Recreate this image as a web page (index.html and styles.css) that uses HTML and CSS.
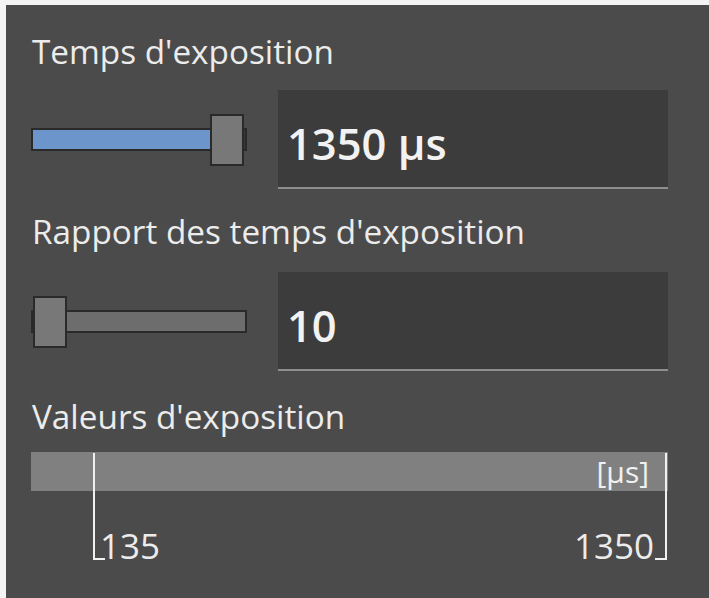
FILE: index.html
```html
<!DOCTYPE html>
<html lang="fr">
<head>
<meta charset="utf-8">
<title>Exposition</title>
<link rel="stylesheet" href="styles.css">
</head>
<body>
<div class="panel">
  <div class="label l1">Temps d'exposition</div>
  <div class="row r1">
    <div class="slider">
      <div class="track blue"></div>
      <div class="thumb" style="left: 179px"></div>
    </div>
    <div class="field">1350 µs</div>
  </div>
  <div class="label l2">Rapport des temps d'exposition</div>
  <div class="row r2">
    <div class="slider">
      <div class="track"></div>
      <div class="thumb" style="left: 2px"></div>
    </div>
    <div class="field">10</div>
  </div>
  <div class="label l3">Valeurs d'exposition</div>
  <div class="scale">
    <div class="bar"><span class="unit">[µs]</span></div>
    <div class="range">
      <span class="min">135</span>
      <span class="max">1350</span>
    </div>
  </div>
</div>
</body>
</html>
```
FILE: styles.css
```css
html, body {
  margin: 0;
  padding: 0;
  background: #f4f4f4;
}
body {
  width: 709px;
  height: 598px;
  overflow: hidden;
  font-family: "Open Sans", "Noto Sans", sans-serif;
  color: #ececec;
}
.panel {
  box-sizing: border-box;
  margin: 5px 0 0 6px;
  width: 703px;
  height: 593px;
  background: #4b4b4b;
  padding: 26px 41px 0 25px;
  display: flex;
  flex-direction: column;
}
.label {
  font-size: 33.3px;
  line-height: 40px;
  height: 40px;
  white-space: nowrap;
  padding-left: 1px;
}
.l2 { margin-top: 22px; }
.l3 { margin-top: 25px; }
.row {
  display: flex;
  align-items: center;
  gap: 31px;
  margin-top: 19px;
}
.r2 { margin-top: 21px; }
.slider {
  position: relative;
  width: 216px;
  height: 52px;
  display: flex;
  align-items: center;
}
.track {
  box-sizing: border-box;
  width: 100%;
  height: 23px;
  background: #6d6d6d;
  border: 2px solid #2a2a2a;
}
.track.blue {
  background: linear-gradient(to right, #6b95cb 0, #6b95cb 90%, #3a3a3a 90%);
}
.thumb {
  position: absolute;
  top: 0;
  box-sizing: border-box;
  width: 34px;
  height: 52px;
  background: #787878;
  border: 2px solid #2a2a2a;
}
.field {
  box-sizing: border-box;
  width: 390px;
  height: 99px;
  background: #3c3c3c;
  border-bottom: 2px solid #8e8e8e;
  display: flex;
  align-items: center;
  padding: 10px 0 0 9px;
  font-size: 43.5px;
  font-weight: 600;
  color: #f2f2f2;
}
.scale {
  margin-top: 16px;
  display: flex;
  flex-direction: column;
}
.bar {
  height: 39px;
  background: #808080;
  display: flex;
  align-items: center;
  justify-content: flex-end;
  padding-right: 19px;
}
.unit {
  font-size: 30px;
  line-height: 1;
  color: #f0f0f0;
}
.range {
  position: relative;
  box-sizing: border-box;
  margin: -38px 1px 0 62px;
  height: 107px;
  border-left: 2px solid #f0f0f0;
  border-right: 2px solid #f0f0f0;
  display: flex;
  justify-content: space-between;
  align-items: flex-end;
  font-size: 35px;
  line-height: 35px;
}
.range::before, .range::after {
  content: "";
  position: absolute;
  bottom: 0;
  width: 10px;
  height: 2px;
  background: #f0f0f0;
}
.range::before { left: 0; }
.range::after { right: 0; }
.min { padding-left: 5px; margin-bottom: -3px; }
.max { padding-right: 11px; margin-bottom: -3px; }
```
